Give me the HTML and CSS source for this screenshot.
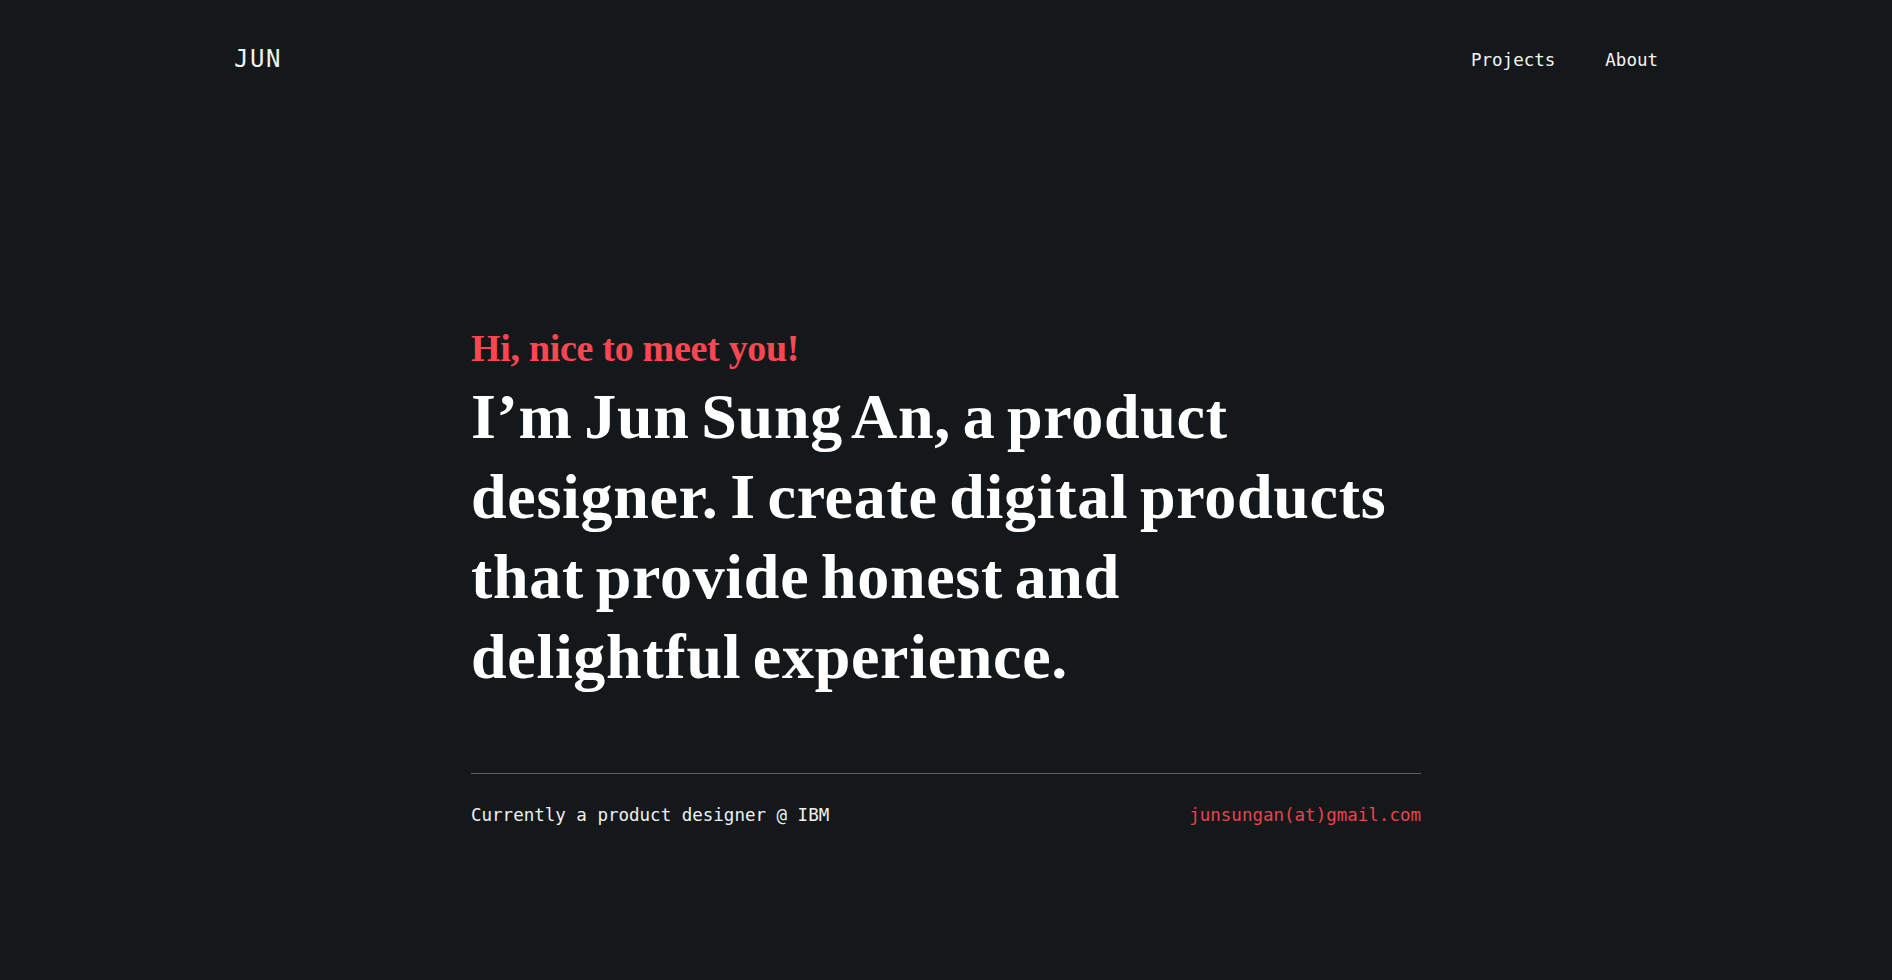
FILE: index.html
```html
<!DOCTYPE html>
<html lang="en">
<head>
<meta charset="utf-8">
<title>Jun Sung An</title>
<link rel="stylesheet" href="styles.css">
</head>
<body>
<header class="site-header">
  <a class="logo" href="#">JUN</a>
  <nav class="nav">
    <a href="#">Projects</a>
    <a href="#">About</a>
  </nav>
</header>
<main class="hero">
  <p class="greeting">Hi, nice to meet you!</p>
  <h1 class="headline">I’m Jun Sung An, a product<br>designer. I create digital products<br>that provide honest and<br>delightful experience.</h1>
  <div class="divider"></div>
  <div class="meta">
    <span class="current">Currently a product designer @ IBM</span>
    <a class="email" href="#">junsungan(at)gmail.com</a>
  </div>
</main>
</body>
</html>
```
FILE: styles.css
```css
html, body {
  margin: 0;
  padding: 0;
  background: #15181b;
  color: #f4f4f4;
  height: 100%;
}
a { color: inherit; text-decoration: none; }

.site-header {
  height: 116px;
  max-width: 1424px;
  margin: 0 auto;
  display: flex;
  align-items: center;
  justify-content: space-between;
}
.logo {
  font-family: "DejaVu Sans Mono", "Liberation Mono", monospace;
  font-size: 24px;
  line-height: 30px;
  letter-spacing: 1.5px;
  color: #f0f0f0;
  margin-top: 2px;
}
.nav {
  display: flex;
  gap: 50px;
  margin-top: 3px;
}
.nav a {
  font-family: "DejaVu Sans Mono", "Liberation Mono", monospace;
  font-size: 17.5px;
  line-height: 24px;
  color: #f4f4f4;
}

.hero {
  max-width: 950px;
  margin: 0 auto;
  padding-top: 209px;
}
.greeting {
  margin: 0 0 6px;
  font-family: "Liberation Serif", "Times New Roman", serif;
  font-weight: 700;
  font-size: 38px;
  line-height: 46px;
  color: #fa4752;
  letter-spacing: -0.3px;
}
.headline {
  margin: 0;
  font-family: "Liberation Serif", "Times New Roman", serif;
  font-weight: 700;
  font-size: 64px;
  line-height: 80px;
  color: #ffffff;
  letter-spacing: 0.7px;
  word-spacing: -5px;
}
.divider {
  margin-top: 76px;
  height: 1px;
  background: #5a5d60;
}
.meta {
  display: flex;
  justify-content: space-between;
  padding-top: 29px;
  font-family: "DejaVu Sans Mono", "Liberation Mono", monospace;
  font-size: 17.5px;
  line-height: 24px;
}
.current { color: #f0f0f0; }
.email { color: #e8434d; }
```
